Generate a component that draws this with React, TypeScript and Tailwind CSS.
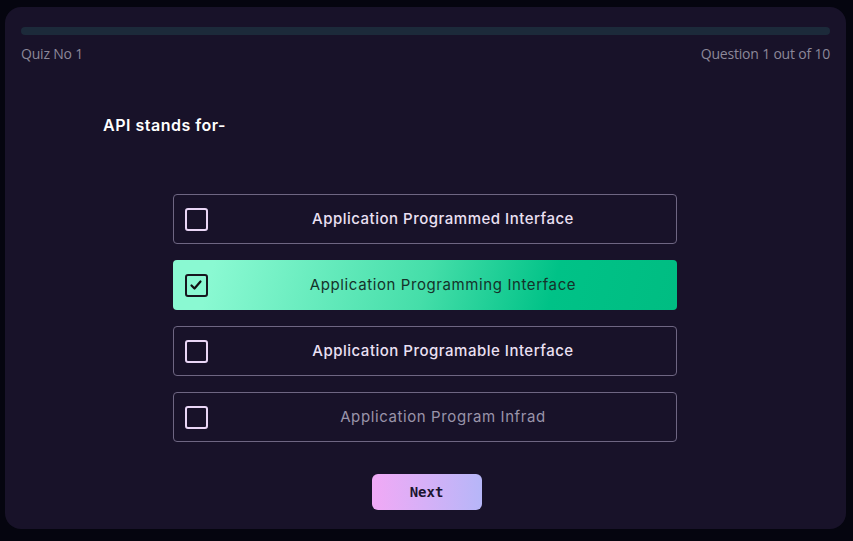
import React, { useState } from 'react';

const options = [
  'Application Programmed Interface',
  'Application Programming Interface',
  'Application Programable Interface',
  'Application Program Infrad',
];

export default function App() {
  const [selected, setSelected] = useState(1);

  return (
    <div className="h-[541px] w-[853px] bg-[#05050f] pt-[7px] pl-[5px] font-['Inter',sans-serif]">
      <div className="flex h-[522px] w-[841px] flex-col rounded-[16px] bg-[#181229] px-4 pt-5">
        {/* Progress */}
        <div className="h-2 w-full rounded-full bg-[#1c2a3a]" />
        <div className="mt-[8px] flex justify-between font-['Open_Sans',sans-serif] text-[14px] tracking-[-0.2px] text-[#8c8899]">
          <span>Quiz No 1</span>
          <span>Question 1 out of 10</span>
        </div>

        <h2 className="mt-[49px] pl-[82px] text-[16px] font-semibold tracking-[0.5px] text-white">API stands for-</h2>

        {/* Options */}
        <div className="mt-[57px] flex flex-col items-center gap-4 pr-[2px]">
          {options.map((opt, i) => {
            const isSel = selected === i;
            const muted = i === 3;
            return (
              <button
                key={opt}
                onClick={() => setSelected(i)}
                className={
                  isSel
                    ? 'flex h-[50px] w-[504px] items-center rounded-[4px] bg-[linear-gradient(105deg,#8af9d2_8%,#45dea9_50%,#00c287_75%,#00bd82)] px-3 text-left'
                    : 'flex h-[50px] w-[504px] items-center rounded-[4px] border border-[#6e6682] px-[11px] text-left'
                }
              >
                <span
                  className={
                    isSel
                      ? 'flex h-[23px] w-[23px] items-center justify-center rounded-[3px] border-[2.5px] border-[#16161e]'
                      : 'h-[23px] w-[23px] rounded-[3px] border-2 border-[#ead6f6]'
                  }
                >
                  {isSel && (
                    <svg width="14" height="14" viewBox="0 0 14 14" fill="none">
                      <path d="M2.5 7.5 L5.5 10.5 L11.5 3.5" stroke="#111" strokeWidth="2.2" strokeLinecap="round" strokeLinejoin="round" />
                    </svg>
                  )}
                </span>
                <span
                  className={
                    isSel
                      ? 'flex-1 pl-[14px] text-center text-[15px] tracking-[0.6px] text-[#15322a]'
                      : muted
                        ? 'flex-1 pl-[14px] text-center text-[15px] tracking-[0.6px] text-[#9a94aa]'
                        : 'flex-1 pl-[14px] text-center text-[15px] font-medium tracking-[0.5px] text-[#ebe0f3]'
                  }
                >
                  {opt}
                </span>
              </button>
            );
          })}
        </div>

        <div className="mt-[32px] flex justify-center">
          <button className="ml-[2px] h-9 w-[110px] rounded-[6px] bg-gradient-to-r from-[#f1a9f6] to-[#b6b6f8] font-['DejaVu_Sans_Mono',monospace] text-[14px] font-bold text-[#1b1530]">
            Next
          </button>
        </div>
      </div>
    </div>
  );
}
